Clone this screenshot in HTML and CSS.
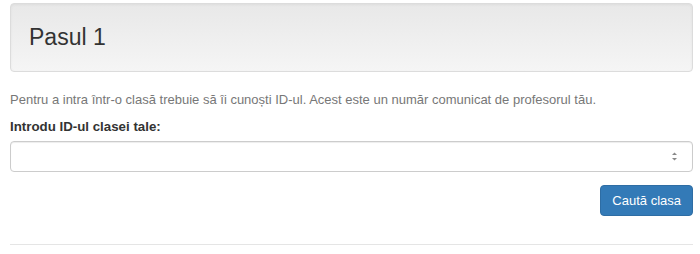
FILE: index.html
```html
<!DOCTYPE html>
<html lang="ro">

<head>
    <meta charset="UTF-8">
    <meta name="viewport" content="width=device-width, initial-scale=1.0">
    <title>Pasul 1</title>
    <link rel="stylesheet" href="styles.css">
</head>

<body>
    <div class="page">
        <!-- titlu pas -->
        <div class="well">
            <h3>Pasul 1</h3>
        </div>
        <p class="hint">Pentru a intra într-o clasă trebuie să îi cunoști ID-ul. Acest este un număr comunicat de profesorul tău.</p>
        <form class="join">
            <label for="classId">Introdu ID-ul clasei tale:</label>
            <div class="field">
                <input type="text" id="classId" inputmode="numeric">
                <svg class="spin" width="7" height="11" viewBox="0 0 7 11">
                    <path d="M3.5 1.5 L6 4 L1 4 Z" fill="#888"/>
                    <path d="M3.5 9.5 L6 7 L1 7 Z" fill="#888"/>
                </svg>
            </div>
            <div class="actions">
                <button type="button" class="btn">Caută clasa</button>
            </div>
        </form>
        <hr>
    </div>
</body>

</html>
```

FILE: styles.css
```css
* {
    box-sizing: border-box;
}

body {
    margin: 0;
    font-family: "Liberation Sans", Arial, sans-serif;
    font-size: 13px;
    color: #333;
    background: #fff;
}

.page {
    padding: 3px 7px 0 10px;
}

.well {
    background: linear-gradient(to bottom, #e8e8e8 0, #f5f5f5 100%);
    border: 1px solid #dcdcdc;
    border-radius: 4px;
    box-shadow: inset 0 1px 3px rgba(0, 0, 0, .05);
    padding: 21px 18px;
}

.well h3 {
    margin: 0;
    font-size: 23px;
    font-weight: 400;
    line-height: 25px;
    color: #333;
}

.hint {
    margin: 19px 0 0;
    line-height: 18px;
    color: #777;
}

.join label {
    display: block;
    margin-top: 9px;
    font-size: 13.3px;
    font-weight: 700;
    line-height: 18px;
}

.field {
    display: flex;
    align-items: center;
    margin-top: 5px;
    height: 31px;
    border: 1px solid #ccc;
    border-radius: 4px;
    box-shadow: inset 0 1px 1px rgba(0, 0, 0, .075);
    padding: 0 14px 0 11px;
}

.field input {
    flex: 1;
    border: 0;
    outline: 0;
    background: transparent;
    font: inherit;
    color: #555;
}

.field .spin {
    display: block;
}

.actions {
    display: flex;
    justify-content: flex-end;
    margin-top: 13px;
}

.btn {
    height: 31px;
    padding: 0 11px;
    font-family: inherit;
    font-size: 13px;
    color: #fff;
    background: #337ab7;
    border: 1px solid #2e6da4;
    border-radius: 4px;
    cursor: pointer;
}

hr {
    margin: 28px 0 0;
    border: 0;
    border-top: 1px solid #e5e5e5;
}
```
